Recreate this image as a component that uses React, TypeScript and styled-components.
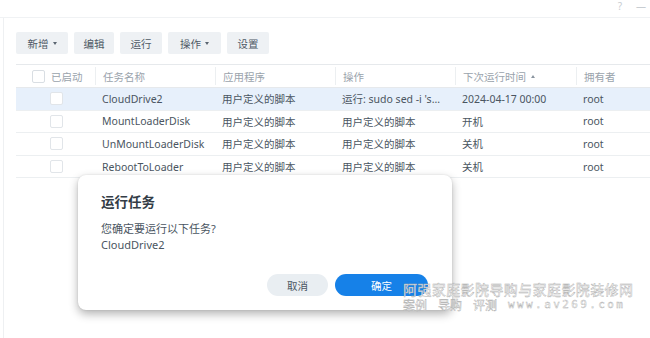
import React from "react";
import styled, { createGlobalStyle } from "styled-components";

const Global = createGlobalStyle`
  html, body { margin: 0; padding: 0; background: #fff; }
  body { font-family: "Noto Sans", "Noto Sans CJK SC", sans-serif; width: 650px; height: 338px; overflow: hidden; }
`;

const Page = styled.div`
  position: relative;
  width: 650px;
  height: 338px;
  display: flex;
  flex-direction: column;
  background: #fff;
`;

const TopBar = styled.div`
  height: 17px;
  border-bottom: 1px solid #f0f2f4;
  display: flex;
  justify-content: flex-end;
  align-items: flex-start;
  gap: 14px;
  padding-right: 4px;
  color: #c8cdd2;
  font-size: 10px;
  line-height: 12px;
`;

const Panel = styled.div`
  flex: 1;
  margin-left: 3px;
  border-left: 1px solid #eef0f2;
  padding: 14px 0 0 12px;
  display: flex;
  flex-direction: column;
`;

const Toolbar = styled.div`
  display: flex;
  gap: 6px;
  height: 22px;
`;

const ToolButton = styled.div<{ $w: number }>`
  width: ${(p) => p.$w}px;
  height: 22px;
  background: #eef1f4;
  border-radius: 2px;
  color: #4f5a66;
  font-size: 10.5px;
  display: flex;
  align-items: center;
  justify-content: center;
  gap: 4px;
`;

const Caret = styled.span`
  width: 0;
  height: 0;
  border-left: 2.5px solid transparent;
  border-right: 2.5px solid transparent;
  border-top: 3px solid #5a6570;
`;

const Table = styled.div`
  margin-top: 10px;
  border-top: 1px solid #e6e9ec;
  display: flex;
  flex-direction: column;
`;

const cols = "79px 120px 120px 120px 121px 1fr";

const HeaderRow = styled.div`
  display: grid;
  grid-template-columns: ${cols};
  height: 22px;
  border-bottom: 1px solid #e6e9ec;
  color: #9aa3ac;
  font-size: 10.5px;
`;

const HeadCell = styled.div<{ $sep?: boolean }>`
  display: flex;
  align-items: center;
  gap: 6px;
  padding-left: 7px;
  border-left: ${(p) => (p.$sep ? "1px solid #eceff1" : "none")};
  margin: 2px 0;
`;

const HeadCheck = styled.span`
  margin-left: 9px;
  width: 11px;
  height: 11px;
  border: 1px solid #d9dee3;
  border-radius: 2px;
  background: #fff;
`;

const SortUp = styled.span`
  width: 0;
  height: 0;
  margin-left: -1px;
  border-left: 2.5px solid transparent;
  border-right: 2.5px solid transparent;
  border-bottom: 3px solid #8a95a0;
`;

const Row = styled.div<{ $sel?: boolean }>`
  display: grid;
  grid-template-columns: ${cols};
  height: 22.6px;
  box-sizing: border-box;
  border-bottom: 1px solid #eceff1;
  background: ${(p) => (p.$sel ? "#e7f0fb" : "#fff")};
  color: #4a5561;
  font-size: 10.5px;
`;

const Cell = styled.div`
  display: flex;
  align-items: center;
  padding-left: 7px;
  white-space: nowrap;
  overflow: hidden;
`;

const CheckCell = styled.div`
  display: flex;
  align-items: center;
  padding-left: 34px;
`;

const Box = styled.span`
  width: 11px;
  height: 11px;
  border: 1px solid #e1e5e9;
  border-radius: 2px;
  background: #fff;
`;

const Dialog = styled.div`
  position: absolute;
  left: 78px;
  top: 175px;
  width: 374px;
  height: 135px;
  background: #fff;
  border-radius: 8px;
  box-shadow: 0 4px 10px rgba(0, 0, 0, 0.3), 0 0 2px rgba(0, 0, 0, 0.12);
  box-sizing: border-box;
  padding: 17px 23px 0 23px;
  display: flex;
  flex-direction: column;
`;

const Title = styled.div`
  font-size: 13.5px;
  font-weight: 700;
  color: #333c46;
  line-height: 20px;
`;

const Msg = styled.div`
  margin-top: 9px;
  font-size: 11px;
  line-height: 16px;
  color: #4a5561;
`;

const Actions = styled.div`
  margin-top: auto;
  margin-bottom: 14px;
  display: flex;
  justify-content: flex-end;
  gap: 7px;
  padding-right: 1px;
`;

const Btn = styled.div<{ $primary?: boolean }>`
  width: ${(p) => (p.$primary ? 93 : 61)}px;
  height: 22px;
  border-radius: 11px;
  background: ${(p) => (p.$primary ? "#1681e8" : "#e9eef2")};
  color: ${(p) => (p.$primary ? "#fff" : "#4a5561")};
  font-size: 10.5px;
  display: flex;
  align-items: center;
  justify-content: center;
`;

const Watermark = styled.div`
  position: absolute;
  left: 403px;
  top: 282px;
  display: flex;
  flex-direction: column;
  font-family: "Noto Sans CJK SC", sans-serif;
  color: rgba(255, 255, 255, 0.9);
  -webkit-text-stroke: 0.4px #ababab;
  pointer-events: none;
`;

const WmTitle = styled.div`
  font-size: 14px;
  letter-spacing: 0.4px;
  line-height: 14px;
  height: 14px;
  white-space: nowrap;
`;

const WmSub = styled.div`
  display: flex;
  gap: 11px;
  font-size: 12px;
  line-height: 13px;
  height: 13px;
  margin-top: 2px;
  white-space: nowrap;
`;

const WmUrl = styled.span`
  font-family: "DejaVu Sans Mono", monospace;
  font-size: 11px;
  letter-spacing: 2.4px;
`;

const rows = [
  { name: "CloudDrive2", app: "用户定义的脚本", op: "运行: sudo sed -i 's...", next: "2024-04-17 00:00", sel: true },
  { name: "MountLoaderDisk", app: "用户定义的脚本", op: "用户定义的脚本", next: "开机" },
  { name: "UnMountLoaderDisk", app: "用户定义的脚本", op: "用户定义的脚本", next: "关机" },
  { name: "RebootToLoader", app: "用户定义的脚本", op: "用户定义的脚本", next: "关机" },
];

export default function App() {
  return (
    <Page>
      <Global />
      <TopBar>
        <span>?</span>
        <span>—</span>
      </TopBar>
      <Panel>
        <Toolbar>
          <ToolButton $w={52}>新增<Caret /></ToolButton>
          <ToolButton $w={40}>编辑</ToolButton>
          <ToolButton $w={42}>运行</ToolButton>
          <ToolButton $w={53}>操作<Caret /></ToolButton>
          <ToolButton $w={42}>设置</ToolButton>
        </Toolbar>
        <Table>
          <HeaderRow>
            <HeadCell><HeadCheck />已启动</HeadCell>
            <HeadCell $sep>任务名称</HeadCell>
            <HeadCell $sep>应用程序</HeadCell>
            <HeadCell $sep>操作</HeadCell>
            <HeadCell $sep>下次运行时间<SortUp /></HeadCell>
            <HeadCell $sep>拥有者</HeadCell>
          </HeaderRow>
          {rows.map((r) => (
            <Row key={r.name} $sel={r.sel}>
              <CheckCell><Box /></CheckCell>
              <Cell>{r.name}</Cell>
              <Cell>{r.app}</Cell>
              <Cell>{r.op}</Cell>
              <Cell>{r.next}</Cell>
              <Cell>root</Cell>
            </Row>
          ))}
        </Table>
      </Panel>
      <Dialog>
        <Title>运行任务</Title>
        <Msg>
          您确定要运行以下任务?
          <br />
          CloudDrive2
        </Msg>
        <Actions>
          <Btn>取消</Btn>
          <Btn $primary>确定</Btn>
        </Actions>
      </Dialog>
      <Watermark>
        <WmTitle>阿强家庭影院导购与家庭影院装修网</WmTitle>
        <WmSub>
          <span>案例</span>
          <span>导购</span>
          <span>评测</span>
          <WmUrl>www.av269.com</WmUrl>
        </WmSub>
      </Watermark>
    </Page>
  );
}
